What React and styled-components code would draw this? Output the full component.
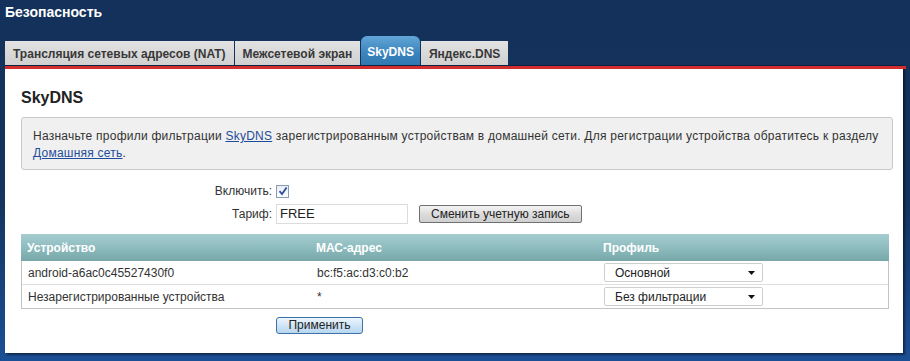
import React, { useState } from 'react';
import styled, { createGlobalStyle } from 'styled-components';

const GlobalStyle = createGlobalStyle`
    html, body {
        margin: 0;
        padding: 0;
    }
    body {
        font-family: "Liberation Sans", Arial, sans-serif;
        font-size: 12px;
        color: #333;
    }
`;

const tabs = ['Трансляция сетевых адресов (NAT)', 'Межсетевой экран', 'SkyDNS', 'Яндекс.DNS'];

const devices = [
    { name: 'android-a6ac0c45527430f0', mac: 'bc:f5:ac:d3:c0:b2', profile: 'Основной' },
    { name: 'Незарегистрированные устройства', mac: '*', profile: 'Без фильтрации' },
];

function CheckBox({ checked }) {
    return (
        <Check>
            {checked && (
                <svg width="10" height="10" viewBox="0 0 10 10">
                    <path d="M1.5 5.2 L4 8 L8.6 1.4" fill="none" stroke="#2c4f9e" strokeWidth="1.8" />
                </svg>
            )}
        </Check>
    );
}

function Select({ value }) {
    return (
        <SelectBox>
            <span>{value}</span>
            <svg width="7" height="4" viewBox="0 0 7 4">
                <path d="M0 0 H7 L3.5 4 Z" fill="#111" />
            </svg>
        </SelectBox>
    );
}

function App() {
    const [active] = useState(2);

    return (
        <Page>
            <GlobalStyle />
            <Title>Безопасность</Title>
            <TabBar>
                {tabs.map((t, i) => (
                    <Tab key={t} $active={i === active}>{t}</Tab>
                ))}
            </TabBar>
            <Panel>
                <Heading>SkyDNS</Heading>
                <Notice>
                    Назначьте профили фильтрации <a href="#skydns">SkyDNS</a> зарегистрированным устройствам в домашней сети. Для регистрации устройства обратитесь к разделу{' '}
                    <a href="#home">Домашняя сеть</a>.
                </Notice>
                <Form>
                    <Label>Включить:</Label>
                    <Field>
                        <CheckBox checked />
                    </Field>
                    <Label>Тариф:</Label>
                    <Field>
                        <TextInput>FREE</TextInput>
                        <GrayButton>Сменить учетную запись</GrayButton>
                    </Field>
                </Form>
                <Table>
                    <HeadRow>
                        <span>Устройство</span>
                        <span>МАС-адрес</span>
                        <span>Профиль</span>
                    </HeadRow>
                    {devices.map((d) => (
                        <Row key={d.name}>
                            <span>{d.name}</span>
                            <span>{d.mac}</span>
                            <span><Select value={d.profile} /></span>
                        </Row>
                    ))}
                </Table>
                <Actions>
                    <BlueButton>Применить</BlueButton>
                </Actions>
            </Panel>
        </Page>
    );
}

const Page = styled.div`
    width: 910px;
    height: 361px;
    box-sizing: border-box;
    padding: 4px 5px 0 5px;
    background: linear-gradient(#13315a 0%, #14345f 55%, #1b4f95 100%);
    overflow: hidden;
`;

const Title = styled.div`
    color: #fff;
    font-weight: bold;
    font-size: 14px;
    line-height: 16px;
    height: 16px;
`;

const TabBar = styled.div`
    display: flex;
    align-items: flex-end;
    margin-top: 16px;
    height: 29px;
    gap: 1px;
    border-bottom: 1px solid #0c2344;
`;

const Tab = styled.div`
    display: flex;
    align-items: center;
    font-weight: bold;
    font-size: 12px;
    height: ${(p) => (p.$active ? '29px' : '24px')};
    box-sizing: border-box;
    color: ${(p) => (p.$active ? '#fff' : '#383838')};
    background: ${(p) =>
        p.$active
            ? 'linear-gradient(#62a6d6, #3a83bd 60%, #2f78b2)'
            : 'linear-gradient(#e2e2e2, #d0d0d0)'};
    border-radius: ${(p) => (p.$active ? '6px 6px 0 0' : '0')};
    padding-top: ${(p) => (p.$active ? '2px' : '1px')};
    padding-left: ${(p) => (p.$active ? '6px' : '8px')};
    padding-right: ${(p) => (p.$active ? '6px' : '8px')};
`;

const Panel = styled.div`
    width: 898px;
    height: 287px;
    box-sizing: border-box;
    background: #fff;
    border-top: 3px solid #d22e2e;
    padding: 19px 16px 0 16px;
    box-shadow: 2px 2px 2px rgba(0, 0, 0, 0.45);
    position: relative;
    &::after {
        content: '';
        position: absolute;
        top: -3px;
        right: -3px;
        width: 3px;
        height: 3px;
        background: #d22e2e;
    }
`;

const Heading = styled.h2`
    margin: 0;
    font-size: 16px;
    line-height: 20px;
    font-weight: bold;
    color: #222;
`;

const Notice = styled.div`
    margin-top: 9px;
    width: 872px;
    box-sizing: border-box;
    background: #f0f0f0;
    border: 1px solid #c8c8c8;
    border-radius: 3px;
    padding: 10px 3px 7px 11px;
    line-height: 17px;
    letter-spacing: 0.24px;
    color: #333;
    a {
        color: #1f4c9a;
        text-decoration: underline;
    }
`;

const Form = styled.div`
    display: grid;
    grid-template-columns: 251px 1fr;
    column-gap: 4px;
    row-gap: 6px;
    margin-top: 14px;
    align-items: center;
`;

const Label = styled.div`
    text-align: right;
    color: #333;
`;

const Field = styled.div`
    display: flex;
    align-items: center;
    gap: 11px;
`;

const Check = styled.span`
    display: inline-flex;
    align-items: center;
    justify-content: center;
    width: 11px;
    height: 11px;
    border: 1px solid #8a99b4;
    background: linear-gradient(#e8edf5, #fdfdfd);
`;

const TextInput = styled.div`
    width: 132px;
    height: 20px;
    box-sizing: border-box;
    border: 1px solid #dcdcdc;
    padding: 0 3px;
    line-height: 18px;
    font-size: 13px;
    color: #222;
`;

const GrayButton = styled.div`
    height: 18px;
    box-sizing: border-box;
    padding: 0 11px;
    border: 1px solid #707070;
    border-radius: 2px;
    background: linear-gradient(#f4f4f4, #dcdcdc 50%, #cfcfcf);
    line-height: 16px;
    color: #222;
`;

const Table = styled.div`
    margin-top: 10px;
    width: 866px;
    border: 1px solid #c4c4c4;
    border-top: none;
`;

const Cols = styled.div`
    display: grid;
    grid-template-columns: 289px 288px 1fr;
    align-items: center;
    span {
        padding-left: 6px;
    }
`;

const HeadRow = styled(Cols)`
    height: 27px;
    margin: 0 -1px;
    background: linear-gradient(#a6cdd0, #8ebcbf 50%, #77a7a9);
    color: #fff;
    font-weight: bold;
    span:last-child {
        padding-left: 5px;
    }
`;

const Row = styled(Cols)`
    height: 23px;
    color: #333;
    & + & {
        border-top: 1px solid #dedede;
    }
    span:last-child {
        padding-left: 5px;
    }
`;

const SelectBox = styled.div`
    width: 159px;
    height: 19px;
    box-sizing: border-box;
    border: 1px solid #cfcfcf;
    border-radius: 2px;
    display: flex;
    align-items: center;
    justify-content: space-between;
    padding: 0 7px 0 4px;
    color: #222;
`;

const Actions = styled.div`
    display: flex;
    margin-top: 8px;
    padding-left: 255px;
`;

const BlueButton = styled.div`
    width: 87px;
    height: 17px;
    box-sizing: border-box;
    border: 1px solid #3c72a8;
    border-radius: 3px;
    background: linear-gradient(#eef6fd, #cfe4f6 50%, #b9d7f0);
    text-align: center;
    line-height: 15px;
    color: #222;
`;

export default App;
